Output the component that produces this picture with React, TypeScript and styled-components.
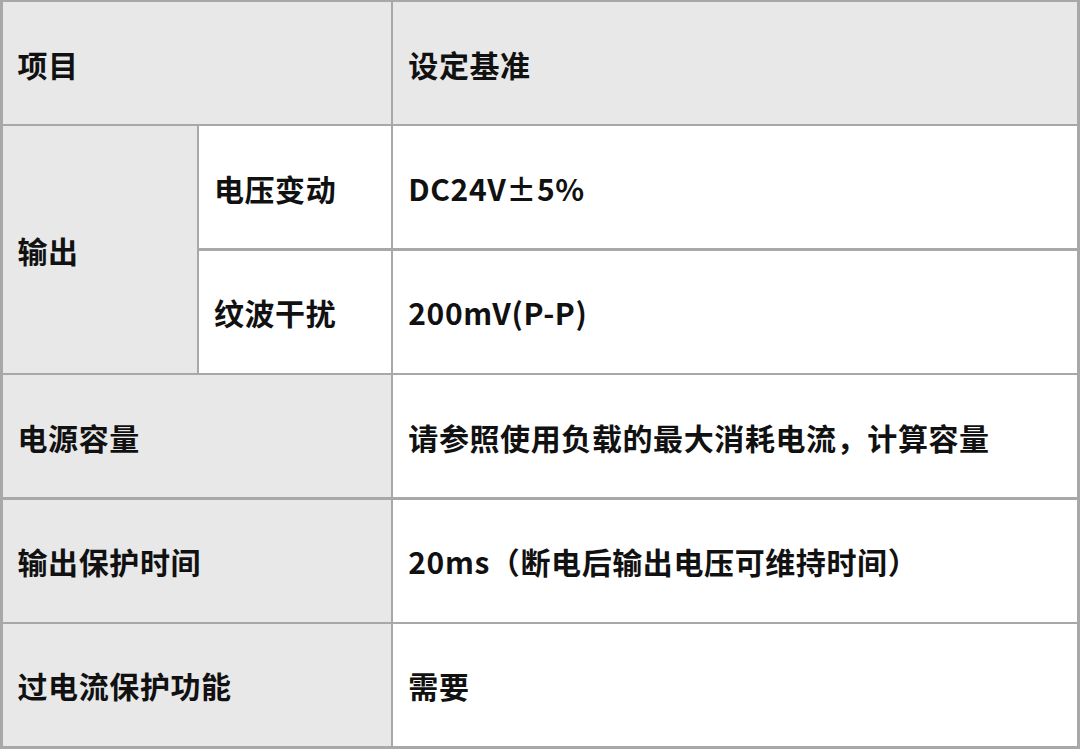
import React from "react";
import styled, { createGlobalStyle } from "styled-components";

const Global = createGlobalStyle`
  html, body { margin: 0; padding: 0; background: #ffffff; }
  body { font-family: "Noto Sans CJK SC", "Noto Sans", sans-serif; }
`;

const Table = styled.div`
  width: 1080px;
  box-sizing: border-box;
  display: grid;
  grid-template-columns: 194px 192px 1fr;
  grid-template-rows: repeat(6, 122px);
  gap: 2.4px;
  padding: 2px 3px 3px 2.5px;
  background: #a8a8a8;
`;

const Cell = styled.div<{ $gray?: boolean; $col?: string; $row?: string }>`
  background: ${(p) => (p.$gray ? "#e8e8e8" : "#ffffff")};
  grid-column: ${(p) => p.$col ?? "auto"};
  grid-row: ${(p) => p.$row ?? "auto"};
  display: flex;
  align-items: center;
  padding: 1px 0 0 15px;
  box-sizing: border-box;
  font-size: 30px;
  font-weight: 700;
  letter-spacing: 0.6px;
  color: #111111;
  white-space: nowrap;
`;

const rows: { label: string; value: string }[] = [
  { label: "电源容量", value: "请参照使用负载的最大消耗电流，计算容量" },
  { label: "输出保护时间", value: "20ms（断电后输出电压可维持时间）" },
  { label: "过电流保护功能", value: "需要" },
];

export default function App() {
  return (
    <>
      <Global />
      <Table>
        <Cell $gray $col="1 / 3">项目</Cell>
        <Cell $gray>设定基准</Cell>

        <Cell $gray $col="1" $row="2 / 4">输出</Cell>
        <Cell>电压变动</Cell>
        <Cell>DC24V±5%</Cell>
        <Cell>纹波干扰</Cell>
        <Cell>200mV(P-P)</Cell>

        {rows.map((r) => (
          <React.Fragment key={r.label}>
            <Cell $gray $col="1 / 3">{r.label}</Cell>
            <Cell>{r.value}</Cell>
          </React.Fragment>
        ))}
      </Table>
    </>
  );
}
